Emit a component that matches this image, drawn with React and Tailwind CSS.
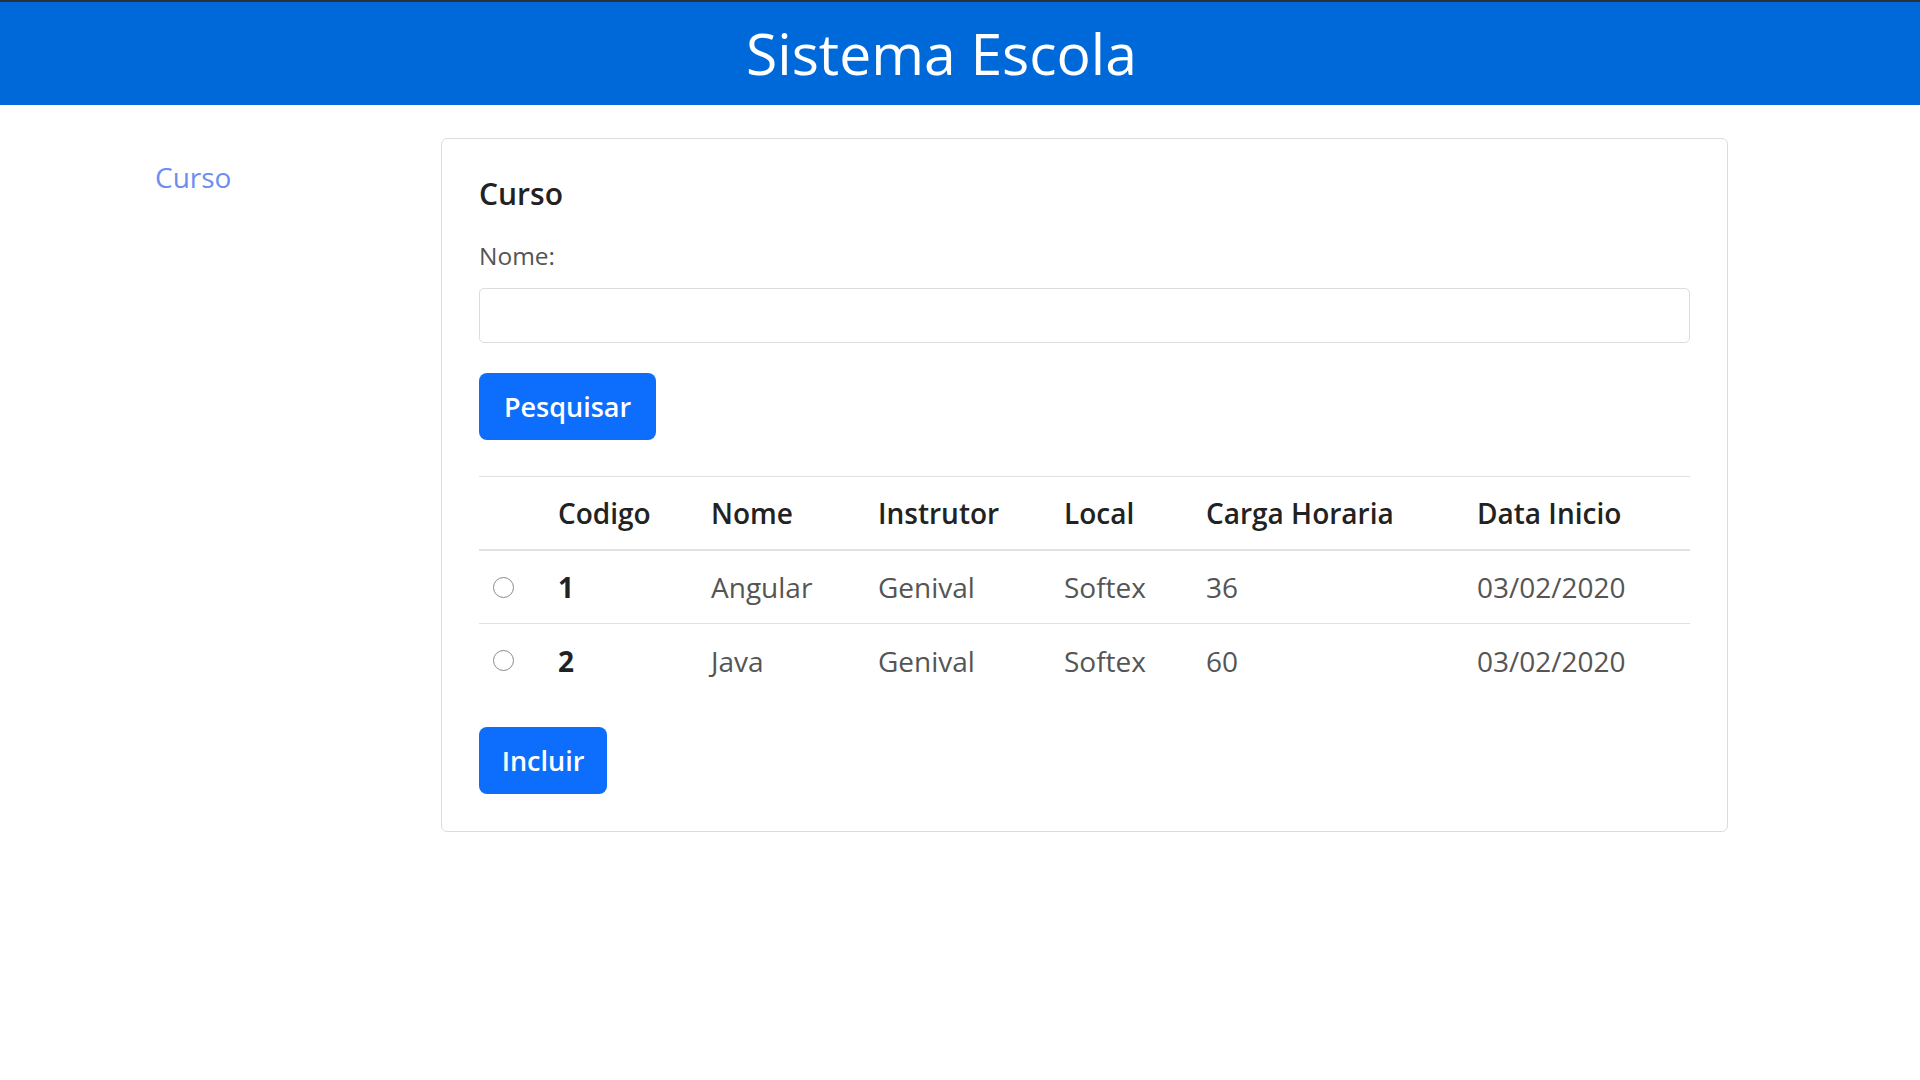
export default function App() {
  const cursos = [
    { codigo: 1, nome: 'Angular', instrutor: 'Genival', local: 'Softex', carga: 36, data: '03/02/2020' },
    { codigo: 2, nome: 'Java', instrutor: 'Genival', local: 'Softex', carga: 60, data: '03/02/2020' },
  ];
  const cols = 'grid grid-cols-[65px_153px_167px_186px_142px_271px_227px] items-center';

  return (
    <div className="min-h-screen bg-white font-['Open_Sans',sans-serif]">
      {/* Header */}
      <header className="h-[105px] bg-[#0069d9] border-t-2 border-[#2b2f38] flex items-center justify-center pr-[37px]">
        <h1 className="text-white text-[57px] leading-none">Sistema Escola</h1>
      </header>

      <div className="flex">
        {/* Sidebar */}
        <aside className="w-[441px] pl-[155px] pt-[51px]">
          <a href="#" className="text-[28px] leading-[42px] text-[#6b8ef0]">Curso</a>
        </aside>

        {/* Card */}
        <main className="mt-[33px] w-[1287px] rounded-md border border-[#dcdcdc] px-[37px] pt-[37px] pb-[37px]">
          <h2 className="text-[30px] leading-[36px] font-semibold text-[#222]">Curso</h2>
          <label className="block mt-[25px] text-[24.5px] leading-[37px] text-[#555]">Nome:</label>
          <input
            type="text"
            className="mt-[14px] block w-full h-[55px] rounded-[5px] border border-[#dcdcdc] bg-white px-4 text-[28px] outline-none"
          />
          <button className="mt-[30px] flex items-center justify-center w-[177px] h-[67px] rounded-lg bg-[#0d6efd] text-white text-[27px] font-semibold leading-none">
            Pesquisar
          </button>

          {/* Table */}
          <div className="mt-[36px]">
            <div className={`${cols} h-[75px] border-t border-b-2 border-[#dee2e6] text-[28px] font-semibold text-[#222]`}>
              <div></div>
              <div className="pl-[14px]">Codigo</div>
              <div className="pl-[14px]">Nome</div>
              <div className="pl-[14px]">Instrutor</div>
              <div className="pl-[14px]">Local</div>
              <div className="pl-[14px]">Carga Horaria</div>
              <div className="pl-[14px]">Data Inicio</div>
            </div>
            {cursos.map((c, i) => (
              <div
                key={c.codigo}
                className={`${cols} h-[73px] text-[28px] text-[#555] ${i === 0 ? 'border-b border-[#dee2e6]' : ''}`}
              >
                <div className="pl-[14px]">
                  <span className="block w-[21px] h-[21px] rounded-full border border-[#8a8a8a] bg-white"></span>
                </div>
                <div className="pl-[14px] font-bold text-[#222]">{c.codigo}</div>
                <div className="pl-[14px]">{c.nome}</div>
                <div className="pl-[14px]">{c.instrutor}</div>
                <div className="pl-[14px]">{c.local}</div>
                <div className="pl-[14px]">{c.carga}</div>
                <div className="pl-[14px]">{c.data}</div>
              </div>
            ))}
          </div>

          <button className="mt-[30px] flex items-center justify-center w-[128px] h-[67px] rounded-lg bg-[#0d6efd] text-white text-[27px] font-semibold leading-none">
            Incluir
          </button>
        </main>
      </div>
    </div>
  );
}
